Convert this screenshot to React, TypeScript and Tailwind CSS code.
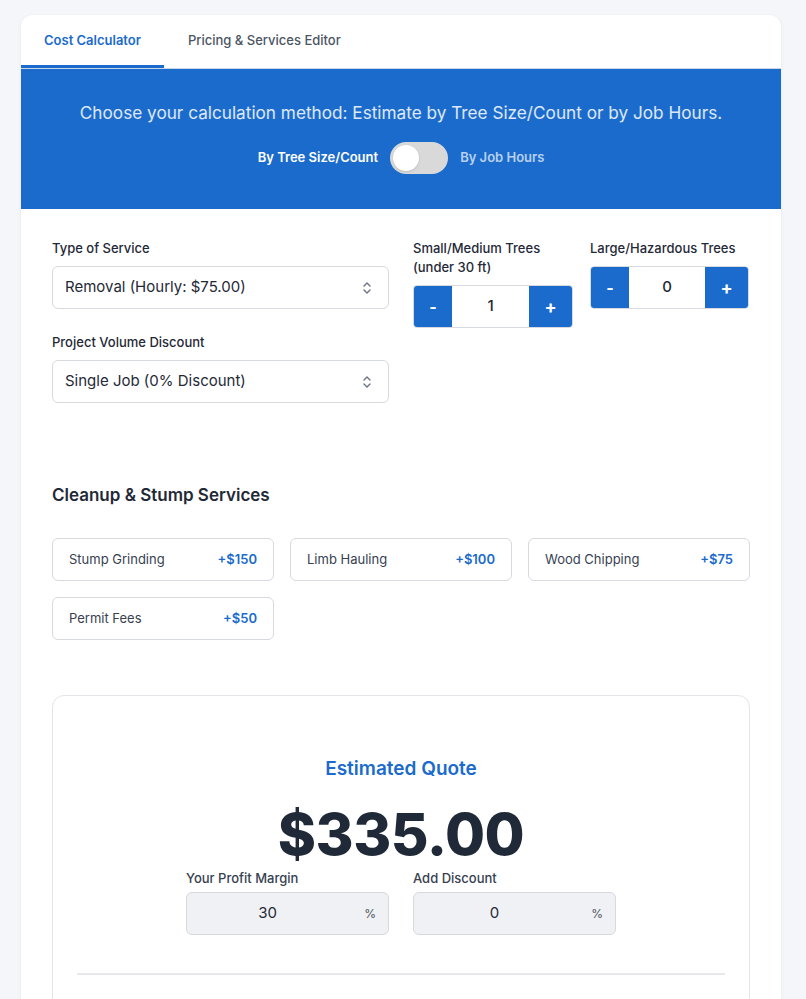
import React from "react";

const blue = "bg-[#1a6bcc]";

const ChevronUpDown = () => (
  <svg width="10" height="14" viewBox="0 0 10 14" fill="none" className="text-[#6b7280]">
    <path d="M2 5l3-3 3 3M2 9l3 3 3-3" stroke="currentColor" strokeWidth="1.4" strokeLinecap="round" strokeLinejoin="round" />
  </svg>
);

const FakeSelect = ({ value }: { value: string }) => (
  <div className="h-[43px] flex items-center justify-between pl-3 pr-4 border border-[#d6d9de] rounded-md bg-white">
    <span className="text-[15px] text-[#1f2937]">{value}</span>
    <ChevronUpDown />
  </div>
);

const Stepper = ({ value }: { value: number }) => (
  <div className="h-[43px] flex border border-[#d6d9de] rounded-[4px] overflow-hidden bg-white">
    <div className={`w-[38px] ${blue} text-white flex items-center justify-center text-[16px] font-bold`}>-</div>
    <div className="flex-1 flex items-center justify-center text-[15px] font-medium text-[#1f2937]">{value}</div>
    <div className={`w-[43px] ${blue} text-white flex items-center justify-center text-[18px] font-bold`}>+</div>
  </div>
);

const services = [
  { name: "Stump Grinding", price: "+$150" },
  { name: "Limb Hauling", price: "+$100" },
  { name: "Wood Chipping", price: "+$75" },
  { name: "Permit Fees", price: "+$50" },
];

const PercentInput = ({ label, value }: { label: string; value: string }) => (
  <div className="w-[203px]">
    <div className="text-[13px] leading-5 font-medium text-[#374151] mb-1">{label}</div>
    <div className="relative h-[43px] flex items-center justify-center pr-10 bg-[#f0f1f4] border border-[#d6d9de] rounded-md">
      <span className="text-[15px] text-[#1f2937]">{value}</span>
      <span className="absolute right-3 text-[12px] text-[#4b5563]">%</span>
    </div>
  </div>
);

const App = () => {
  return (
    <div className="min-h-screen bg-[#f5f6f9] pt-[15px] pl-[21px] pb-10" style={{ fontFamily: "Inter, 'Noto Sans', sans-serif" }}>
      <div className="w-[760px] bg-white rounded-xl shadow-[0_1px_4px_rgba(0,0,0,0.06)] overflow-hidden">
        {/* tabs */}
        <div className="flex border-b border-[#c9d6ea]">
          <div className="px-[23px] pt-[15px] pb-[15px] text-[13px] leading-5 font-semibold text-[#1a6bcc] border-b-[3px] border-[#1a6bcc]">
            Cost Calculator
          </div>
          <div className="px-6 pt-[15px] pb-[15px] text-[13px] leading-5 font-medium text-[#4b5563]">
            Pricing &amp; Services Editor
          </div>
        </div>

        {/* banner */}
        <div className={`${blue} pt-8 pb-[35px] flex flex-col items-center`}>
          <p className="text-[17.2px] leading-6 text-white/85">
            Choose your calculation method: Estimate by Tree Size/Count or by Job Hours.
          </p>
          <div className="mt-[17px] flex items-center gap-3">
            <span className="text-[13px] font-semibold text-white">By Tree Size/Count</span>
            <div className="w-[58px] h-[32px] rounded-full bg-[#d9d9d9] flex items-center px-[3px]">
              <div className="w-[26px] h-[26px] rounded-full bg-white shadow-sm" />
            </div>
            <span className="text-[13px] font-semibold text-white/70">By Job Hours</span>
          </div>
        </div>

        {/* form */}
        <div className="px-[31px] pt-[30px] pb-14">
          <div className="flex items-start">
            <div className="w-[337px] mr-6">
              <div className="text-[13px] leading-[19px] font-medium text-[#1f2937] mb-2">Type of Service</div>
              <FakeSelect value="Removal (Hourly: $75.00)" />
              <div className="text-[13px] leading-[19px] font-medium text-[#1f2937] mt-6 mb-2">Project Volume Discount</div>
              <FakeSelect value="Single Job (0% Discount)" />
            </div>
            <div className="w-[160px] mr-[17px]">
              <div className="text-[13px] leading-[19px] font-medium text-[#1f2937] mb-2">
                Small/Medium Trees (under 30 ft)
              </div>
              <Stepper value={1} />
            </div>
            <div className="w-[159px]">
              <div className="text-[13px] leading-[19px] font-medium text-[#1f2937] mb-2">Large/Hazardous Trees</div>
              <Stepper value={0} />
            </div>
          </div>

          <h2 className="mt-20 text-[17px] leading-6 font-semibold text-[#1f2937]">Cleanup &amp; Stump Services</h2>

          <div className="mt-[31px] grid grid-cols-3 gap-4">
            {services.map((s) => (
              <div
                key={s.name}
                className="h-[43px] flex items-center justify-between px-4 border border-[#d6d9de] rounded-md bg-white"
              >
                <span className="text-[13px] text-[#374151]">{s.name}</span>
                <span className="text-[13px] font-semibold text-[#1a6bcc]">{s.price}</span>
              </div>
            ))}
          </div>

          {/* quote */}
          <div className="mt-[55px] border border-[#e3e5e8] rounded-xl px-6 pt-[59px] pb-10">
            <div className="flex flex-col items-center">
              <h3 className="text-[19px] leading-7 font-semibold text-[#1a6bcc]">Estimated Quote</h3>
              <div className="mt-[22px] text-[58px] leading-none font-extrabold text-[#1f2937] tracking-[-0.5px]">
                $335.00
              </div>
              <div className="mt-[5px] flex gap-6">
                <PercentInput label="Your Profit Margin" value="30" />
                <PercentInput label="Add Discount" value="0" />
              </div>
            </div>
            <div className="mt-[38px] h-[2px] bg-[#e8e9ec]" />
            <div className="h-24" />
          </div>
        </div>
      </div>
    </div>
  );
};

export default App;
